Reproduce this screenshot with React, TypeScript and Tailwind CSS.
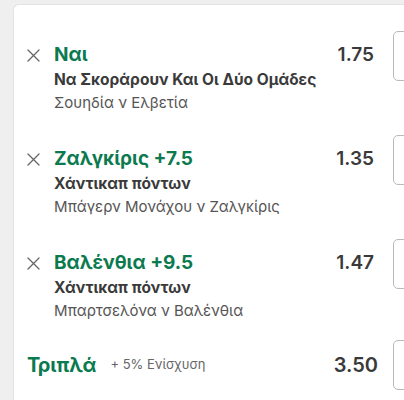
const bets = [
    { pick: 'Ναι', market: 'Να Σκοράρουν Και Οι Δύο Ομάδες', event: 'Σουηδία ν Ελβετία', odds: '1.75' },
    { pick: 'Ζαλγκίρις +7.5', market: 'Χάντικαπ πόντων', event: 'Μπάγερν Μονάχου ν Ζαλγκίρις', odds: '1.35' },
    { pick: 'Βαλένθια +9.5', market: 'Χάντικαπ πόντων', event: 'Μπαρτσελόνα ν Βαλένθια', odds: '1.47' },
]

function CloseIcon() {
    return (
        <svg width="13" height="13" viewBox="0 0 13 13" fill="none" stroke="#666" strokeWidth="1.3" strokeLinecap="round">
            <path d="M1 1L12 12M12 1L1 12" />
        </svg>
    )
}

function StakeBox() {
    return <div className="w-[60px] h-[50px] shrink-0 rounded-[5px] border border-[#b9b9b9] bg-white" />
}

export default function App() {
    return (
        <div className="w-[404px] h-[400px] overflow-hidden bg-[#efefef] pt-[4px] pl-[13px]" style={{ fontFamily: 'Inter, "Noto Sans", sans-serif' }}>
            <div className="w-[440px] h-[420px] bg-white rounded-tl-[6px] border-l border-t border-[#e3e3e3] pt-[26px]">
                {bets.map((b) => (
                    <div key={b.pick} className="flex items-start h-[104px]">
                        <div className="w-[40px] pl-[13px] pt-[18px] shrink-0">
                            <CloseIcon />
                        </div>
                        <div className="flex-1 pt-[12px] whitespace-nowrap">
                            <div className="text-[19px] leading-[24px] font-bold text-[#0b7a4f]">{b.pick}</div>
                            <div className="text-[15.5px] leading-[22px] font-bold text-[#3a3a3a] mt-[2px]">{b.market}</div>
                            <div className="text-[15px] leading-[23px] text-[#555]">{b.event}</div>
                        </div>
                        <div className="pt-[12px] mr-[19px] text-[19px] leading-[24px] font-semibold text-[#3a3a3a]">{b.odds}</div>
                        <StakeBox />
                    </div>
                ))}
                <div className="flex items-center h-[50px] mt-[-3px]">
                    <div className="pl-[13px] text-[20px] font-bold text-[#0b7a4f]">Τριπλά</div>
                    <div className="ml-[14px] text-[13px] text-[#666] flex-1">+ 5% Ενίσχυση</div>
                    <div className="mr-[15px] text-[20px] font-semibold text-[#3a3a3a]">3.50</div>
                    <StakeBox />
                </div>
            </div>
        </div>
    )
}
